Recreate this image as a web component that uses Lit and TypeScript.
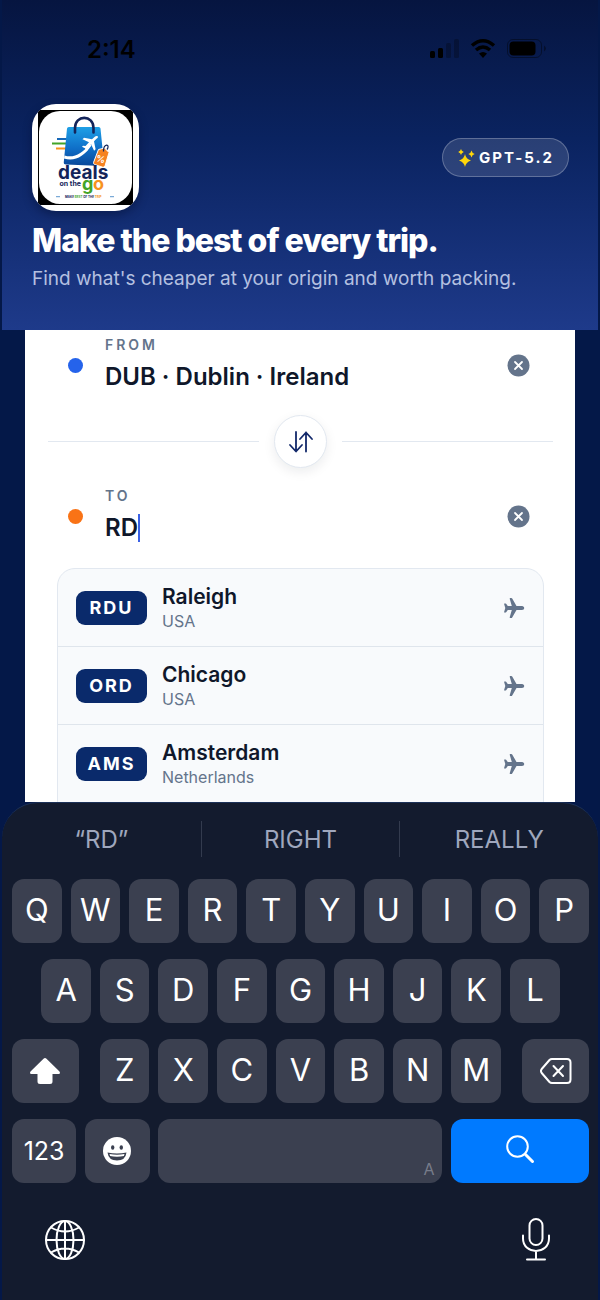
import { LitElement, html, css, svg, nothing } from "lit";
import { customElement, property, state } from "lit/decorators.js";

interface Airport {
  code: string;
  city: string;
  country: string;
}

const AIRPORTS: Airport[] = [
  { code: "RDU", city: "Raleigh", country: "USA" },
  { code: "ORD", city: "Chicago", country: "USA" },
  { code: "AMS", city: "Amsterdam", country: "Netherlands" },
];

// Shopping bag logo with the plane, the price tag and the brand name
@customElement("deals-logo")
class DealsLogo extends LitElement {
  static styles = css`
    :host {
      display: flex;
      align-items: center;
      justify-content: center;
      width: 107px;
      height: 107px;
      border-radius: 24px;
      background: #fff;
      overflow: hidden;
      box-shadow: 0 4px 10px rgba(2, 10, 40, 0.4);
    }
    svg {
      width: 95px;
      height: 95px;
    }
    text {
      font-family: Inter, "Open Sans", sans-serif;
      font-weight: 700;
    }
    .deals {
      font-size: 19px;
      fill: #13245a;
    }
    .on {
      font-size: 7px;
      fill: #13245a;
    }
    .go {
      font-size: 18px;
    }
    .percent {
      font-size: 9px;
      fill: #fff;
    }
    .line {
      font-size: 3px;
      fill: #13245a;
    }
    .green {
      fill: #43a428;
    }
    .orange {
      fill: #f7931e;
    }
  `;

  render() {
    return html`
      <svg viewBox="0 0 95 95" role="img" aria-label="Deals on the go">
        <defs>
          <linearGradient id="bag" x1="0" y1="0" x2="0" y2="1">
            <stop offset="0" stop-color="#1fa0e6" />
            <stop offset="0.55" stop-color="#0f6fc8" />
            <stop offset="1" stop-color="#0a4698" />
          </linearGradient>
        </defs>
        <rect width="95" height="95" fill="#000" />
        <rect x="1" y="1" width="93" height="93" rx="21" fill="#fff" />
        <g stroke-width="2.2">
          <path d="M19 29h10" stroke="#1668b8" />
          <path d="M14 33.500h15" stroke="#43a428" />
          <path d="M18 38.500h10" stroke="#f7931e" />
        </g>
        <path d="M29 18.500q.3-1.500 1.800-1.500h30q1.500 0 1.700 1.500l3.500 35q.2 2.500-2 2.500l-36-1.500q-2.500 0-2.200-2.500z" fill="url(#bag)" />
        <path d="M37 22.500v-4.500c0-13.500 18.500-13.500 18.500 0v4.500" fill="none" stroke="#13245a" stroke-width="2.600" stroke-linecap="round" />
        <path d="M26.500 45.500c9 3 18-2 25-11.500l2 1.500c-7.500 11-17 16.500-27.500 13z" fill="#fff" />
        <path d="M60 26.500c-1-1-2.500-.5-3.500.5l-2.500 2.300-8-1.500-1.500 1.500 6.500 3-3.500 3.600-2.500-.2-1 1 3 1.600 1.600 3 1-1-.1-2.500 3.600-3.500 3 6.500 1.500-1.500-1.600-8 2.500-2.500c1-1 2-1.500 1.500-2.300z" fill="#fff" />
        <path d="M60.500 39.500l6-1.500 4.500 4.500-4 13.500q-.7 1.700-2.300 1.200l-8-2.700q-1.600-.6-1.100-2.200z" fill="#f58220" stroke="#fff" stroke-width="1" />
        <path d="M65.500 41.500c0-3 1-6 3-6.300s2 2.500.5 4.300" fill="none" stroke="#13245a" stroke-width="1.200" />
        <text class="percent" x="58" y="52" transform="rotate(15 62 50)">%</text>
        <text class="deals" x="20" y="69">deals</text>
        <text class="on" x="21.500" y="76">on the</text>
        <text class="go green" x="44" y="80">g</text>
        <text class="go orange" x="55" y="80">o</text>
        <path d="M18 86.700h4M72 86.700h4" stroke="#1668b8" stroke-width="0.700" />
        <text class="line" x="27" y="87.800">MAKE <tspan class="green">BEST</tspan> OF THE <tspan class="orange">TRIP</tspan></text>
      </svg>
    `;
  }
}

// One input of the route form with its dot and its clear button
@customElement("route-field")
class RouteField extends LitElement {
  @property() name = "";
  @property() label = "";
  @property() value = "";
  @property({ type: Boolean }) active = false;

  static styles = css`
    :host {
      display: flex;
      align-items: center;
      padding: 0 43px;
    }
    .dot {
      width: 15px;
      height: 15px;
      margin-right: 22px;
      border-radius: 50%;
      background: #2563eb;
      flex: none;
    }
    .dot.to {
      background: #f97316;
    }
    .field {
      flex: 1;
      min-width: 0;
    }
    label {
      display: block;
      font-size: 14px;
      line-height: 18px;
      font-weight: 600;
      letter-spacing: 3px;
      color: #64748b;
    }
    .entry {
      display: flex;
      align-items: center;
      height: 34px;
      margin-top: 6px;
    }
    input {
      field-sizing: content;
      max-width: 100%;
      padding: 0;
      border: 0;
      outline: 0;
      background: none;
      font: 600 24px/34px Inter, "Open Sans", sans-serif;
      color: #0f172a;
    }
    .caret {
      width: 2px;
      height: 28px;
      background: #3b62e6;
    }
    button {
      display: flex;
      padding: 0;
      border: 0;
      background: none;
    }
    svg {
      width: 27px;
      height: 27px;
    }
  `;

  private clear() {
    this.value = "";
  }

  render() {
    return html`
      <span class="dot ${this.name}"></span>
      <div class="field">
        <label for="place">${this.label}</label>
        <div class="entry">
          <input id="place" .value=${this.value} autocomplete="off" />
          ${this.active ? html`<span class="caret"></span>` : nothing}
        </div>
      </div>
      <button aria-label="Clear ${this.label}" @click=${this.clear}>
        <svg viewBox="0 0 27 27">
          <circle cx="13.500" cy="13.500" r="11" fill="#64748b" />
          <path d="M10 10l7 7M17 10l-7 7" stroke="#fff" stroke-width="1.800" stroke-linecap="round" />
        </svg>
      </button>
    `;
  }
}

@customElement("airport-list")
class AirportList extends LitElement {
  @property({ attribute: false }) airports: Airport[] = [];

  static styles = css`
    ul {
      margin: 0;
      padding: 0 0 18px;
      list-style: none;
      border: 1px solid #e2e8f0;
      border-radius: 18px;
      background: #f8fafc;
      overflow: hidden;
    }
    li + li {
      border-top: 1px solid #dfe5ec;
    }
    button {
      display: flex;
      align-items: center;
      gap: 15px;
      width: 100%;
      height: 77px;
      padding: 0 18px;
      border: 0;
      background: none;
      text-align: left;
      font-family: inherit;
    }
    .code {
      width: 71px;
      border-radius: 9px;
      background: #0a2a6b;
      color: #fff;
      font-size: 18px;
      line-height: 34px;
      font-weight: 700;
      letter-spacing: 2px;
      text-align: center;
    }
    .place {
      flex: 1;
      display: grid;
    }
    .city {
      font-size: 21px;
      line-height: 26px;
      font-weight: 600;
      color: #0f172a;
    }
    .country {
      font-size: 16px;
      line-height: 22px;
      color: #64748b;
    }
    svg {
      width: 22px;
      height: 22px;
      fill: #64748b;
    }
  `;

  render() {
    return html`
      <ul>
        ${this.airports.map(
          (a) => html`
            <li>
              <button>
                <span class="code">${a.code}</span>
                <span class="place">
                  <span class="city">${a.city}</span>
                  <span class="country">${a.country}</span>
                </span>
                <svg viewBox="0 0 22 22" aria-hidden="true">
                  <path d="M19 9c1.400 0 2.200 1 2.200 2s-.8 2-2.200 2h-5.500l-4.300 7.500q-.3.500-.9.500h-1.100q-.7 0-.5-.7l2.100-7.300h-4l-1.700 2.300q-.2.200-.5.200h-1q-.7 0-.5-.6l1.200-3.900-1.200-3.900q-.2-.6.500-.6h1q.3 0 .5.200l1.700 2.300h4l-2.100-7.300q-.2-.7.500-.7h1.100q.6 0 .9.500l4.300 7.500z" />
                </svg>
              </button>
            </li>
          `
        )}
      </ul>
    `;
  }
}

@customElement("key-board")
class KeyBoard extends LitElement {
  static styles = css`
    :host {
      display: block;
      margin: 0 2px;
      padding: 7px 9px 37px 10px;
      border-top: 1px solid #1c3158;
      border-radius: 36px 36px 0 0;
      background: #131b2e;
      color: #fff;
    }
    button {
      display: flex;
      align-items: center;
      justify-content: center;
      padding: 0;
      border: 0;
      background: none;
      color: inherit;
      font-family: inherit;
    }
    .words {
      display: grid;
      grid-template-columns: repeat(3, 1fr);
      margin: 11px -9px 22px -10px;
    }
    .words button {
      height: 36px;
      font-size: 24px;
      color: #9fa7bd;
    }
    .words button + button {
      border-left: 1px solid #333b4e;
    }
    /* Half-key columns, so every row can be shifted by half a key */
    .keys {
      display: grid;
      grid-template-columns: repeat(20, minmax(0, 1fr));
      gap: 16px 9px;
    }
    .key {
      grid-column: span 2;
      height: 64px;
      padding-bottom: 4px;
      border-radius: 12px;
      background: #3b4050;
      font-size: 31px;
    }
    .key.a {
      grid-column: 2 / span 2;
    }
    .key.z {
      grid-column: 4 / span 2;
    }
    .key.shift {
      grid-column: 1 / span 3;
      margin-right: 12px;
      padding: 0;
    }
    .key.back {
      grid-column: 18 / span 3;
      margin-left: 12px;
      padding: 0;
    }
    .pair {
      grid-column: span 5;
      display: flex;
      gap: 9px;
    }
    .pair .key {
      flex: 1;
      font-size: 25px;
      padding: 0;
    }
    .key.space {
      grid-column: span 10;
      align-items: flex-end;
      justify-content: flex-end;
      padding: 0 8px 4px;
      font-size: 16px;
      color: #777c8a;
    }
    .key.search {
      grid-column: span 5;
      background: #007aff;
    }
    .tools {
      display: flex;
      justify-content: space-between;
      padding: 34px 31px 0;
    }
    svg {
      fill: none;
      stroke: #fff;
      stroke-width: 2;
      stroke-linecap: round;
      stroke-linejoin: round;
    }
    .solid {
      fill: #fff;
      stroke: none;
    }
    .cut {
      fill: #3b4050;
      stroke: none;
    }
  `;

  private letters(row: string) {
    return [...row].map((k) => html`<button class="key ${k.toLowerCase()}">${k}</button>`);
  }

  render() {
    return html`
      <div class="words">
        <button>“RD”</button>
        <button>RIGHT</button>
        <button>REALLY</button>
      </div>
      <div class="keys">
        ${this.letters("QWERTYUIOP")} ${this.letters("ASDFGHJKL")}
        <button class="key shift" aria-label="Shift">
          <svg width="32" height="28" viewBox="0 0 32 28">
            <path class="solid" d="M14.500 1.700q1.500-1.300 3 0l13 12.800q1.300 2-.8 2.500h-6.200v7.500q0 2.500-2.500 2.500h-10q-2.500 0-2.500-2.500v-7.500h-6.200q-2.100-.5-.8-2.500z" />
          </svg>
        </button>
        ${this.letters("ZXCVBNM")}
        <button class="key back" aria-label="Delete">
          <svg width="32" height="28" viewBox="0 0 32 28">
            <path d="M12 2h15q3.500 0 3.500 3.500v17q0 3.500-3.500 3.500h-15q-1.500 0-2.500-1l-7.800-9q-1.400-2 0-4l7.800-9q1-1 2.500-1z" />
            <path d="M13.500 9l9.500 10M23 9l-9.500 10" />
          </svg>
        </button>
        <div class="pair">
          <button class="key">123</button>
          <button class="key" aria-label="Emoji">
            <svg width="30" height="30" viewBox="0 0 30 30">
              <circle class="solid" cx="15" cy="15" r="14" />
              <ellipse class="cut" cx="10.700" cy="11.500" rx="1.700" ry="2.200" />
              <ellipse class="cut" cx="19.300" cy="11.500" rx="1.700" ry="2.200" />
              <path class="cut" d="M5.500 16.500q9.500 2.200 19 0q-1 8-9.500 8t-9.500-8z" />
              <path class="solid" d="M7.500 18q7.500 1.500 15 0l-.6 1.900q-6.900 1.500-13.800 0z" />
            </svg>
          </button>
        </div>
        <button class="key space" aria-label="Space">A</button>
        <button class="key search" aria-label="Search">
          <svg width="30" height="30" viewBox="0 0 30 30">
            <circle cx="12.500" cy="12.500" r="10.300" />
            <path d="M20.500 20.500l7 7" stroke-width="3" />
          </svg>
        </button>
      </div>
      <div class="tools">
        <button aria-label="Next keyboard">
          <svg width="44" height="46" viewBox="0 0 44 46">
            <circle cx="22" cy="23" r="19" />
            <ellipse cx="22" cy="23" rx="8.500" ry="19" />
            <path d="M22 4v38M3 23h38M8 10.500q14 8 28 0M8 35.500q14-8 28 0" />
          </svg>
        </button>
        <button aria-label="Dictate">
          <svg width="44" height="46" viewBox="0 0 44 46">
            <rect x="15.500" y="2" width="13" height="26" rx="6.500" />
            <path d="M9 18.500v3c0 16.500 26 16.500 26 0v-3M22 34v8M13 42.500h18" />
          </svg>
        </button>
      </div>
    `;
  }
}

@customElement("app-root")
class AppRoot extends LitElement {
  @state() private from = "DUB · Dublin · Ireland";
  @state() private to = "RD";

  static styles = css`
    :host {
      display: flex;
      flex-direction: column;
      height: 100vh;
      overflow: hidden;
      background: #041848;
      font-family: Inter, "Open Sans", sans-serif;
    }
    header {
      margin: 0 2px;
      padding: 0 29px 37px 30px;
      background: linear-gradient(#061540, #0a2360 42%, #1e3a8a);
    }
    .status {
      display: flex;
      align-items: center;
      justify-content: space-between;
      height: 98px;
      padding: 0 21px 0 55px;
      font-size: 24px;
      font-weight: 600;
    }
    .status svg {
      width: 118px;
      height: 22px;
    }
    .brand {
      display: flex;
      align-items: center;
      justify-content: space-between;
      padding-top: 6px;
    }
    .model {
      display: flex;
      align-items: center;
      gap: 4px;
      height: 37px;
      padding: 0 14px;
      border: 1px solid rgba(255, 255, 255, 0.25);
      border-radius: 20px;
      background: rgba(255, 255, 255, 0.13);
      color: #fff;
      font-size: 15px;
      font-weight: 700;
      letter-spacing: 2px;
    }
    .model svg {
      width: 18px;
      height: 18px;
      fill: #ffd60a;
    }
    h1 {
      margin: 11px 0 0;
      font-size: 32px;
      line-height: 38px;
      font-weight: 800;
      letter-spacing: -1px;
      color: #fff;
    }
    p {
      margin: 5px 0 0;
      font-size: 19px;
      line-height: 28px;
      color: #b4c0e0;
    }
    main {
      flex: 1;
      min-height: 0;
      margin: 0 25px;
      padding-top: 6px;
      overflow: hidden;
      background: #fff;
    }
    .swap {
      display: flex;
      align-items: center;
      gap: 15px;
      padding: 21px 22px 19px 23px;
    }
    .swap::before,
    .swap::after {
      content: "";
      flex: 1;
      height: 1px;
      background: #e2e8f0;
    }
    .swap button {
      display: flex;
      align-items: center;
      justify-content: center;
      width: 53px;
      height: 53px;
      padding: 0;
      border: 1px solid #e2e8f0;
      border-radius: 50%;
      background: #fff;
      box-shadow: 0 4px 12px rgba(15, 23, 42, 0.08);
    }
    airport-list {
      display: block;
      margin: 23px 31px 0 32px;
    }
  `;

  private swap() {
    [this.from, this.to] = [this.to, this.from];
  }

  private statusIcons() {
    return svg`
      <rect x="0" y="13" width="5" height="7" rx="1.500" />
      <rect x="8" y="10" width="5" height="10" rx="1.500" />
      <rect x="16" y="5" width="5" height="15" rx="1.500" opacity="0.250" />
      <rect x="24" y="1" width="5" height="19" rx="1.500" opacity="0.250" />
      <g fill="none" stroke="#000" stroke-width="3.500">
        <path d="M42 7.500q11-9.500 22 0" />
        <path d="M46 12q7-6 14 0" />
      </g>
      <path d="M53 20l-4-4.500q4-3 8 0z" />
      <rect x="77.500" y="1.500" width="34" height="18" rx="5.500" fill="none" stroke="#000" opacity="0.400" />
      <rect x="79.500" y="3.500" width="26" height="14" rx="4" />
      <path d="M114 7.500q4 3 0 6z" opacity="0.400" />
    `;
  }

  render() {
    return html`
      <header>
        <div class="status">
          <span>2:14</span>
          <svg viewBox="0 0 118 22" aria-hidden="true">${this.statusIcons()}</svg>
        </div>
        <div class="brand">
          <deals-logo></deals-logo>
          <span class="model">
            <svg viewBox="0 0 18 18" aria-hidden="true">
              <path d="M8 5q.9 5 6 6.500q-5.100 1.500-6 6.500q-.9-5-6-6.500q5.100-1.500 6-6.500z" />
              <path d="M14.500 1.500q.5 2.600 3.200 3.500q-2.700.9-3.200 3.500q-.5-2.600-3.200-3.500q2.700-.9 3.200-3.500z" />
              <path d="M4 0q.4 2.200 2.800 3q-2.400.8-2.800 3q-.4-2.200-2.800-3q2.400-.8 2.800-3z" />
            </svg>
            GPT-5.2
          </span>
        </div>
        <h1>Make the best of every trip.</h1>
        <p>Find what's cheaper at your origin and worth packing.</p>
      </header>
      <main>
        <route-field name="from" label="FROM" .value=${this.from}></route-field>
        <div class="swap">
          <button aria-label="Swap" @click=${this.swap}>
            <svg width="26" height="24" viewBox="0 0 26 24" fill="none" stroke="#12286a" stroke-width="1.800" stroke-linecap="round" stroke-linejoin="round">
              <path d="M8 2v19M2 15l6 6.500 6-6.500M18 21.500v-19M12 9l6-6.500 6 6.500" />
            </svg>
          </button>
        </div>
        <route-field name="to" label="TO" .value=${this.to} active></route-field>
        <airport-list .airports=${AIRPORTS}></airport-list>
      </main>
      <key-board></key-board>
    `;
  }
}
